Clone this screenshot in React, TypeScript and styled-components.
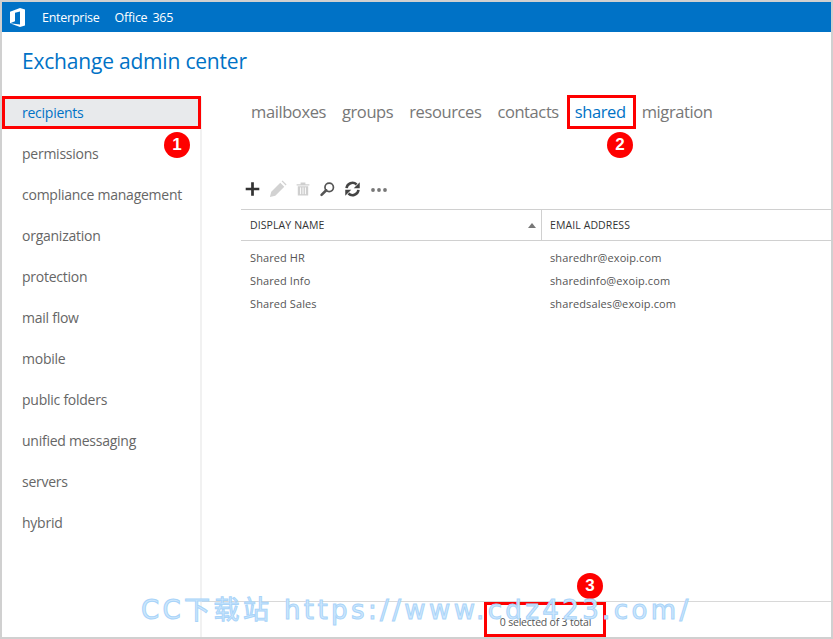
import React from "react"
import styled, { createGlobalStyle } from "styled-components"

const GlobalStyle = createGlobalStyle`
  html, body {
    margin: 0;
    padding: 0;
    background: #fff;
  }
  * {
    box-sizing: border-box;
  }
`

const FONT = `"Open Sans", "Noto Sans CJK SC", sans-serif`

const Frame = styled.div`
  position: relative;
  width: 833px;
  height: 639px;
  border: 2px solid #d0d0d0;
  overflow: hidden;
  display: flex;
  flex-direction: column;
  font-family: ${FONT};
  background: #fff;
`

const TopBar = styled.div`
  height: 30px;
  flex: none;
  background: #0072c6;
  display: flex;
  align-items: center;
  padding-left: 8px;
  color: #fff;
  font-size: 12.5px;
  letter-spacing: -0.25px;
  word-spacing: 2px;
`

const TopLink = styled.span<{ $active?: boolean }>`
  position: relative;
  margin-left: ${p => (p.$active ? "16px" : "15px")};

  ${p =>
    p.$active &&
    `
    &::after {
      content: "";
      position: absolute;
      left: 50%;
      bottom: -9px;
      margin-left: -3px;
      border: 3px solid transparent;
      border-bottom-color: #fff;
    }
  `}
`

const Title = styled.h1`
  margin: 0;
  padding: 14px 0 0 20px;
  height: 65px;
  flex: none;
  font-size: 21px;
  line-height: 30px;
  font-weight: 400;
  letter-spacing: -0.2px;
  color: #0072c6;
`

const Body = styled.div`
  flex: 1;
  min-height: 0;
  display: flex;
`

const Sidebar = styled.nav`
  width: 200px;
  flex: none;
  border-right: 2px solid #f1f1f1;
  display: flex;
  flex-direction: column;
  gap: 9px;
`

const SideItem = styled.div<{ $active?: boolean }>`
  height: 32px;
  line-height: 32px;
  padding-left: 20px;
  font-size: 14px;
  letter-spacing: -0.25px;
  color: ${p => (p.$active ? "#0072c6" : "#666")};
  background: ${p => (p.$active ? "#e8eaec" : "transparent")};
`

const Main = styled.main`
  flex: 1;
  min-width: 0;
  display: flex;
  flex-direction: column;
`

const Tabs = styled.div`
  display: flex;
  gap: 16px;
  height: 74px;
  flex: none;
  padding: 2px 0 0 49px;
`

const Tab = styled.span<{ $active?: boolean }>`
  font-size: 16.5px;
  line-height: 26px;
  letter-spacing: -0.4px;
  color: ${p => (p.$active ? "#0072c6" : "#777")};
`

const Toolbar = styled.div`
  height: 38px;
  flex: none;
  display: flex;
  align-items: center;
  gap: 8px;
  padding: 0 0 2px 42px;
`

const ToolIcon = styled.svg<{ $width?: number }>`
  width: ${p => p.$width ?? 20}px;
  height: 20px;
  flex: none;
`

const Grid = styled.div`
  flex: 1;
  min-height: 0;
  margin-left: 39px;
  display: flex;
  flex-direction: column;
`

const HeadRow = styled.div`
  height: 32px;
  flex: none;
  display: grid;
  grid-template-columns: 300px 1fr;
  border-top: 1px solid #d0d0d0;
  border-bottom: 1px solid #d0d0d0;
`

const HeadCell = styled.div`
  position: relative;
  display: flex;
  align-items: center;
  justify-content: space-between;
  padding: 0 5px 0 9px;
  font-size: 10.5px;
  letter-spacing: 0.1px;
  color: #333;

  & + & {
    border-left: 1px solid #d0d0d0;
    padding-left: 8px;
  }
`

const SortArrow = styled.span`
  width: 0;
  height: 0;
  border: 4px solid transparent;
  border-top: 0;
  border-bottom: 5px solid #777;
`

const Rows = styled.div`
  flex: 1;
  padding-top: 5px;
`

const Row = styled.div`
  height: 23px;
  display: grid;
  grid-template-columns: 300px 1fr;
  align-items: center;
  font-size: 11px;
  letter-spacing: 0.1px;
  color: #555;
`

const Cell = styled.div`
  padding-left: 9px;
`

const StatusBar = styled.div`
  height: 36px;
  flex: none;
  border-top: 1px solid #d8d8d8;
  display: flex;
  justify-content: center;
  align-items: flex-end;
  padding: 0 0 8px 58px;
  font-size: 10.5px;
  letter-spacing: -0.2px;
  color: #555;
`

const RedBox = styled.div<{ $x: number; $y: number; $w: number; $h: number }>`
  position: absolute;
  left: ${p => p.$x - 2}px;
  top: ${p => p.$y - 2}px;
  width: ${p => p.$w}px;
  height: ${p => p.$h}px;
  border: 3px solid #fe0000;
`

const Badge = styled.div<{ $x: number; $y: number }>`
  position: absolute;
  left: ${p => p.$x - 2}px;
  top: ${p => p.$y - 2}px;
  width: 26px;
  height: 26px;
  border-radius: 50%;
  background: #fe0000;
  color: #fff;
  font-family: "Liberation Sans", sans-serif;
  font-weight: 700;
  font-size: 17px;
  line-height: 26px;
  text-align: center;
`

const Watermark = styled.div`
  position: absolute;
  left: 139px;
  top: 590px;
  font-family: "DejaVu Sans", "Noto Sans CJK SC", sans-serif;
  font-size: 26px;
  line-height: 36px;
  white-space: nowrap;
  letter-spacing: 3.4px;
  color: #cfe8fd;
  -webkit-text-stroke: 1px #a9d4f9;
`

const OfficeLogo = () => (
  <svg width="16" height="19" viewBox="0 0 16 19" fill="#fff">
    <path d="M0 3.800 10 0l5 1.400v16.200L10 19 0 15.200l10 1.400V3.400L5 4.800v8.400L0 15.200z" />
  </svg>
)

const PlusIcon = () => (
  <ToolIcon viewBox="0 0 20 20" $width={17}>
    <path d="M2 10h16M10 2v16" stroke="#333" strokeWidth="3.200" fill="none" />
  </ToolIcon>
)

const PencilIcon = () => (
  <ToolIcon viewBox="0 0 20 20" $width={18}>
    <path d="M1 19l1.500-6L12.500 3l4.500 4.500L7 17.500z M14 1.500l1-1 4.500 4.500-1 1z" fill="#d2d2d2" />
  </ToolIcon>
)

const TrashIcon = () => (
  <ToolIcon viewBox="0 0 20 20" $width={16}>
    <path
      d="M2 4h16v1.500H2zM7 2h6v2H7zM3.500 6.500h13V18h-13z"
      fill="#cfcfcf"
    />
    <path d="M7 8v8.500M10 8v8.500M13 8v8.500" stroke="#fff" strokeWidth="1.200" />
  </ToolIcon>
)

const SearchIcon = () => (
  <ToolIcon viewBox="0 0 20 20" $width={17}>
    <circle cx="12" cy="8" r="5" fill="none" stroke="#555" strokeWidth="2" />
    <path d="M8.500 11.500 3 17" stroke="#555" strokeWidth="3" strokeLinecap="round" />
  </ToolIcon>
)

const RefreshIcon = () => (
  <ToolIcon viewBox="0 0 20 20" $width={17}>
    <path
      d="M3 9a7 7 0 0 1 11.800-4.300"
      fill="none"
      stroke="#444"
      strokeWidth="3"
    />
    <path d="M18.500 2v7h-7z" fill="#444" />
    <path
      d="M17 11a7 7 0 0 1-11.800 4.300"
      fill="none"
      stroke="#444"
      strokeWidth="3"
    />
    <path d="M1.500 18v-7h7z" fill="#444" />
  </ToolIcon>
)

const MoreIcon = () => (
  <ToolIcon viewBox="0 0 20 20" $width={20}>
    <circle cx="4" cy="11" r="1.900" fill="#777" />
    <circle cx="10" cy="11" r="1.900" fill="#777" />
    <circle cx="16" cy="11" r="1.900" fill="#777" />
  </ToolIcon>
)

const sideItems = [
  "recipients",
  "permissions",
  "compliance management",
  "organization",
  "protection",
  "mail flow",
  "mobile",
  "public folders",
  "unified messaging",
  "servers",
  "hybrid",
]

const tabs = ["mailboxes", "groups", "resources", "contacts", "shared", "migration"]

const mailboxes = [
  ["Shared HR", "sharedhr@exoip.com"],
  ["Shared Info", "sharedinfo@exoip.com"],
  ["Shared Sales", "sharedsales@exoip.com"],
]

const App: React.FC = () => (
  <Frame>
    <GlobalStyle />
    <TopBar>
      <OfficeLogo />
      <TopLink $active>Enterprise</TopLink>
      <TopLink>Office 365</TopLink>
    </TopBar>
    <Title>Exchange admin center</Title>
    <Body>
      <Sidebar>
        {sideItems.map(item => (
          <SideItem key={item} $active={item === "recipients"}>
            {item}
          </SideItem>
        ))}
      </Sidebar>
      <Main>
        <Tabs>
          {tabs.map(tab => (
            <Tab key={tab} $active={tab === "shared"}>
              {tab}
            </Tab>
          ))}
        </Tabs>
        <Toolbar>
          <PlusIcon />
          <PencilIcon />
          <TrashIcon />
          <SearchIcon />
          <RefreshIcon />
          <MoreIcon />
        </Toolbar>
        <Grid>
          <HeadRow>
            <HeadCell>
              DISPLAY NAME
              <SortArrow />
            </HeadCell>
            <HeadCell>EMAIL ADDRESS</HeadCell>
          </HeadRow>
          <Rows>
            {mailboxes.map(([name, email]) => (
              <Row key={name}>
                <Cell>{name}</Cell>
                <Cell>{email}</Cell>
              </Row>
            ))}
          </Rows>
        </Grid>
        <StatusBar>0 selected of 3 total</StatusBar>
      </Main>
    </Body>
    <RedBox $x={2} $y={96} $w={199} $h={33} />
    <RedBox $x={567} $y={95} $w={69} $h={34} />
    <RedBox $x={484} $y={602} $w={122} $h={35} />
    <Badge $x={164} $y={132}>1</Badge>
    <Badge $x={607} $y={132}>2</Badge>
    <Badge $x={577} $y={573}>3</Badge>
    <Watermark>CC下载站 https://www.cdz423.com/</Watermark>
  </Frame>
)

export default App
